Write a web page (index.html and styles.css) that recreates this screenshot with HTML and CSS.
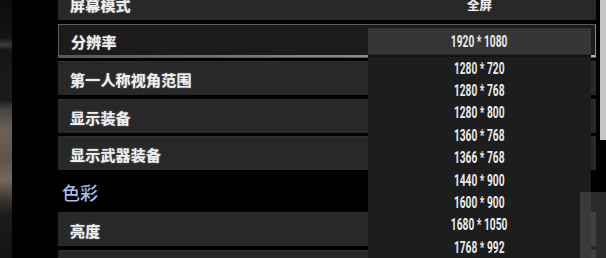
FILE: index.html
```html
<!DOCTYPE html>
<html lang="zh-CN">
<head>
<meta charset="utf-8">
<title>画面设置</title>
<link rel="stylesheet" href="styles.css">
</head>
<body>
<div class="screen">
  <div class="backdrop"></div>
  <div class="panel">
    <div class="row"><span class="label">屏幕模式</span><span class="value">全屏</span></div>
    <div class="row row-active"><span class="label">分辨率</span><span class="value"></span></div>
    <div class="row"><span class="label">第一人称视角范围</span><span class="value"></span></div>
    <div class="row"><span class="label">显示装备</span><span class="value"></span></div>
    <div class="row"><span class="label">显示武器装备</span><span class="value"></span></div>
    <div class="section">色彩</div>
    <div class="row"><span class="label">亮度</span><span class="value"></span></div>
    <div class="row"><span class="label">色彩饱和度</span><span class="value"></span></div>
  </div>
  <div class="scrollbar"><div class="thumb"></div></div>

  <div class="dropdown">
    <div class="dd-current"><span class="num">1920 * 1080</span></div>
    <ul class="dd-list">
      <li><span class="num">1280 * 720</span></li>
      <li><span class="num">1280 * 768</span></li>
      <li><span class="num">1280 * 800</span></li>
      <li><span class="num">1360 * 768</span></li>
      <li><span class="num">1366 * 768</span></li>
      <li><span class="num">1440 * 900</span></li>
      <li><span class="num">1600 * 900</span></li>
      <li><span class="num">1680 * 1050</span></li>
      <li><span class="num">1768 * 992</span></li>
      <li><span class="num">1920 * 1080</span></li>
    </ul>
  </div>
  <div class="hover-shade"></div>
</div>
</body>
</html>
```

FILE: styles.css
```css
html, body {
  margin: 0;
  padding: 0;
  background: #000;
}

.screen {
  position: relative;
  width: 606px;
  height: 258px;
  overflow: hidden;
  display: flex;
  align-items: flex-start;
  background: #000;
  font-family: "Noto Sans CJK SC", "Noto Sans", sans-serif;
}

.backdrop {
  flex: 0 0 12px;
  height: 258px;
  background: linear-gradient(to bottom,
    #0c0c0c 0px, #151515 38px, #3c3c3c 45px, #161616 50px,
    #1b1b1b 100px, #4a4440 110px, #6a6058 130px, #5e554e 160px,
    #74685e 180px, #3a3431 200px, #1c1a19 215px, #141414 258px);
}

.panel {
  flex: 0 0 538px;
  margin-left: 46px;
  margin-top: -14px;
  display: flex;
  flex-direction: column;
  gap: 3.5px;
}

.row {
  box-sizing: border-box;
  height: 34px;
  display: grid;
  grid-template-columns: 1fr 223px 5px;
  align-items: center;
  background: #282828;
  border-top: 1px solid #2f2f2f;
}

.row-active {
  border: 1px solid #5a5a5a;
  border-right-color: #8c8c8c;
  background: linear-gradient(to right, #5a5a5a, #b4b4b4) bottom / 100% 2px no-repeat, #1b1b1b;
}

.label {
  padding-left: 12px;
  padding-top: 2px;
  color: #f0f0f0;
  font-size: 15px;
  font-weight: 700;
  letter-spacing: 0.2px;
  text-shadow: 0 0 1px rgba(255, 255, 255, 0.5), 0 0 3px rgba(255, 255, 255, 0.2);
}

.value {
  text-align: center;
  color: #ededed;
  font-size: 12.5px;
  font-weight: 700;
  padding-top: 1px;
  text-shadow: 0 0 1px rgba(255, 255, 255, 0.4);
}

.section {
  height: 35px;
  display: flex;
  align-items: center;
  padding-left: 4px;
  padding-top: 2px;
  box-sizing: border-box;
  color: #a9bde2;
  font-size: 18px;
  font-weight: 500;
}

.scrollbar {
  flex: 0 0 6px;
  margin-left: 4px;
  height: 258px;
}

.thumb {
  height: 140px;
  background: #c6c6c6;
}

.dropdown {
  position: absolute;
  left: 368px;
  top: 28px;
  width: 223px;
  height: 240px;
  background: #121212;
}

.dd-current {
  height: 27px;
  display: flex;
  align-items: center;
  justify-content: center;
  background: #363636;
  border-bottom: 1px solid #2a2a2a;
  box-sizing: border-box;
}

.dd-list {
  list-style: none;
  margin: 2px 0 0 0;
  padding: 0;
  background: #1d1d1d;
}

.dd-list li {
  height: 22.4px;
  display: flex;
  align-items: center;
  justify-content: center;
}

.num {
  display: inline-block;
  font-family: Roboto, "Liberation Sans", sans-serif;
  font-weight: 700;
  font-size: 17px;
  line-height: 1;
  color: #ececec;
  white-space: pre;
  transform: scaleX(0.6);
}

.hover-shade {
  position: absolute;
  left: 580px;
  top: 192px;
  width: 26px;
  height: 66px;
  background: rgba(95, 95, 95, 0.45);
}
```
